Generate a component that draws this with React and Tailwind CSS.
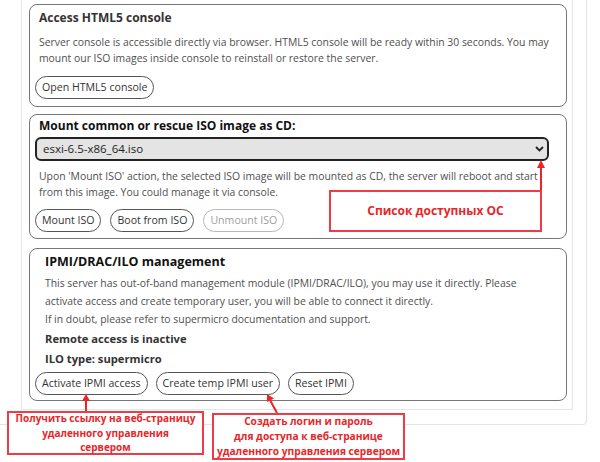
import { useState } from "react";

const isoImages = ["esxi-6.5-x86_64.iso", "esxi-6.7-x86_64.iso", "centos-7-x86_64.iso", "debian-10-amd64.iso"];

function PillButton({ children, disabled }) {
    return (
        <button
            type="button"
            disabled={disabled}
            className={
                disabled
                    ? "h-[23px] px-[6px] rounded-full border border-[#b8b8b8] bg-white text-[10.6px] leading-none text-[#a0a0a0]"
                    : "h-[23px] px-[6px] rounded-full border border-[#555] bg-white text-[10.6px] leading-none text-[#333] cursor-pointer"
            }
        >
            {children}
        </button>
    );
}

function Note({ className, children }) {
    return (
        <div className={"absolute flex items-center justify-center border-2 border-[#ee3b45] bg-white text-center font-bold text-[#e8262a] " + className}>
            {children}
        </div>
    );
}

function App() {
    const [iso, setIso] = useState(isoImages[0]);

    return (
        <div className="relative h-[462px] w-[600px] overflow-hidden bg-white font-['Open_Sans',sans-serif]">
            <div className="-mt-[10px] -ml-[10px] w-[597px] rounded border border-[#e4e4e4] pt-[4px] pl-[30px] pr-[13px] pb-[14px]">
                <div className="flex flex-col border border-[#e6e6e6] pt-[8px] pl-[7px] pr-[5px] pb-[8px]">

                    {/* html5 console */}
                    <div className="rounded-[8px] border border-[#777] px-[5px] pt-[4px] pb-[7px]">
                        <h3 className="pl-[4px] text-[12px] leading-[18px] font-bold text-[#333]">Access HTML5 console</h3>
                        <p className="mt-[7px] pl-[4px] text-[10.4px] leading-[16px] text-[#4f4f4f]">
                            Server console is accessible directly via browser. HTML5 console will be ready within 30 seconds. You may mount our ISO images inside console to reinstall or restore the server.
                        </p>
                        <div className="mt-[10px] flex">
                            <PillButton>Open HTML5 console</PillButton>
                        </div>
                    </div>

                    {/* iso mount */}
                    <div className="mt-[7px] rounded-[8px] border border-[#777] px-[5px] pt-[2px] pb-[6px]">
                        <h3 className="pl-[4px] text-[12px] leading-[18px] font-bold text-[#111]">Mount common or rescue ISO image as CD:</h3>
                        <div className="relative mt-[2px] mr-[12px]">
                            <select
                                value={iso}
                                onChange={(e) => setIso(e.target.value)}
                                className="block h-[24px] w-full appearance-none rounded-[6px] border-2 border-[#222] bg-[#e4e4e4] pl-[6px] text-[11.5px] text-[#222] outline-none"
                            >
                                {isoImages.map((name) => (
                                    <option key={name} value={name}>{name}</option>
                                ))}
                            </select>
                            <svg className="pointer-events-none absolute right-[5px] top-[9px]" width="9" height="6" viewBox="0 0 9 6">
                                <path d="M1 1l3.5 3.5L8 1" fill="none" stroke="#222" strokeWidth="1.8" />
                            </svg>
                        </div>
                        <p className="mt-[7px] pl-[4px] text-[10.4px] leading-[16px] text-[#4f4f4f]">
                            Upon 'Mount ISO' action, the selected ISO image will be mounted as CD, the server will reboot and start from this image. You could manage it via console.
                        </p>
                        <div className="mt-[9px] flex gap-[9px]">
                            <PillButton>Mount ISO</PillButton>
                            <PillButton>Boot from ISO</PillButton>
                            <PillButton disabled>Unmount ISO</PillButton>
                        </div>
                    </div>

                    {/* ipmi */}
                    <div className="mt-[9px] rounded-[8px] border border-[#777] px-[5px] pt-[3px] pb-[5px]">
                        <h3 className="pl-[10px] text-[12.5px] leading-[20px] font-bold text-[#111]">IPMI/DRAC/ILO management</h3>
                        <p className="mt-[2px] pl-[10px] pr-[20px] text-[10.4px] leading-[18px] text-[#4f4f4f]">
                            This server has out-of-band management module (IPMI/DRAC/ILO), you may use it directly. Please activate access and create temporary user, you will be able to connect it directly.
                            <br />
                            If in doubt, please refer to supermicro documentation and support.
                        </p>
                        <p className="mt-[2px] pl-[10px] text-[11.2px] leading-[18px] font-bold text-[#333]">Remote access is inactive</p>
                        <p className="mt-[2px] pl-[10px] text-[11.2px] leading-[18px] font-bold text-[#333]">ILO type: supermicro</p>
                        <div className="mt-[4px] flex gap-[8px]">
                            <PillButton>Activate IPMI access</PillButton>
                            <PillButton>Create temp IPMI user</PillButton>
                            <PillButton>Reset IPMI</PillButton>
                        </div>
                    </div>

                </div>
            </div>

            {/* annotations */}
            <svg className="pointer-events-none absolute left-0 top-0" width="600" height="462">
                <g stroke="#e8262a" strokeWidth="2" fill="#e8262a">
                    <line x1="541" y1="190" x2="541" y2="166" />
                    <polygon points="537,168 545,168 541,160" stroke="none" />
                    <line x1="86" y1="411" x2="86" y2="400" />
                    <polygon points="82,401 90,401 86,394" stroke="none" />
                    <line x1="277" y1="413" x2="270" y2="400" />
                    <polygon points="274,398.5 267,402 267,394" stroke="none" />
                </g>
            </svg>
            <Note className="left-[329px] top-[190px] h-[42px] w-[213px] text-[12px]">Список доступных ОС</Note>
            <Note className="left-[7px] top-[411px] h-[44px] w-[197px] text-[10px] leading-[14.5px]">
                Получить ссылку на веб-страницу<br />удаленного управления<br />сервером
            </Note>
            <Note className="left-[212px] top-[413px] h-[47px] w-[193px] text-[10.2px] leading-[15px]">
                Создать логин и пароль<br />для доступа к веб-странице<br />удаленного управления сервером
            </Note>
        </div>
    );
}

export default App;
